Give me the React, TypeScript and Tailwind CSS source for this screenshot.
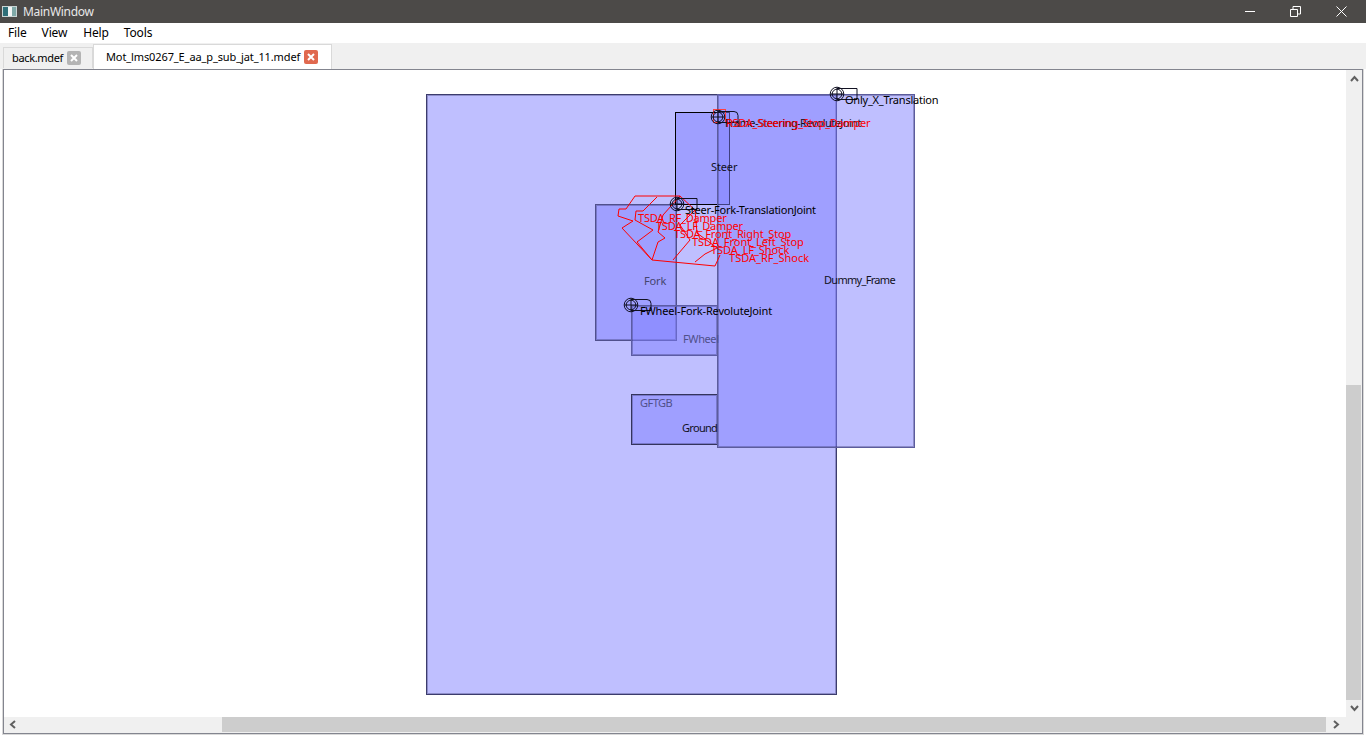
import React from 'react';

const OX = 4;
const OY = 70;

type Box = { x: number; y: number; w: number; h: number; border: string };

const soft = 'shadow-[inset_0_0_0_1px_rgba(50,50,100,0.35)]';

const boxes: Box[] = [
  { x: 426, y: 94, w: 411, h: 601, border: `border-[#3c3c6c] ${soft}` },
  { x: 595, y: 204, w: 82, h: 137, border: `border-[#50508c] ${soft}` },
  { x: 631, y: 305, w: 87, h: 51, border: `border-[#5c5ca4] ${soft}` },
  { x: 631, y: 394, w: 87, h: 51, border: `border-[#34345c] ${soft}` },
  { x: 675, y: 112, w: 55, h: 93, border: 'border-[#000000]' },
  { x: 717, y: 94, w: 198, h: 354, border: `border-[#5c5c9c] ${soft}` },
];

type Label = { x: number; y: number; text: string; color: string; track: string };

const labels: Label[] = [
  { x: 711, y: 160, text: 'Steer', color: 'text-[#111122]', track: 'tracking-[-0.12px]' },
  { x: 644, y: 274, text: 'Fork', color: 'text-[#45456e]', track: 'tracking-[-0.12px]' },
  { x: 683, y: 332, text: 'FWheel', color: 'text-[#50508a]', track: 'tracking-[-0.4px]' },
  { x: 640, y: 396, text: 'GFTGB', color: 'text-[#50508a]', track: 'tracking-[-0.5px]' },
  { x: 682, y: 421, text: 'Ground', color: 'text-[#111122]', track: 'tracking-[-0.7px]' },
  { x: 824, y: 273, text: 'Dummy_Frame', color: 'text-[#111122]', track: 'tracking-[-0.7px]' },
  { x: 845, y: 93, text: 'Only_X_Translation', color: 'text-[#000000]', track: 'tracking-[-0.23px]' },
  { x: 725, y: 116, text: 'Frame-Steering-RevoluteJoint', color: 'text-[#111122]', track: 'tracking-[-0.55px]' },
  { x: 685, y: 203, text: 'Steer-Fork-TranslationJoint', color: 'text-[#000000]', track: 'tracking-[-0.23px]' },
  { x: 640, y: 304, text: 'FWheel-Fork-RevoluteJoint', color: 'text-[#000000]', track: 'tracking-[-0.16px]' },
  { x: 726, y: 116, text: 'RSDA_Steering_Stop_Damper', color: 'text-[#ff0000]', track: 'tracking-[-0.28px]' },
  { x: 638, y: 211, text: 'TSDA_RF_Damper', color: 'text-[#ff0000]', track: 'tracking-[-0.2px]' },
  { x: 656, y: 219, text: 'TSDA_LF_Damper', color: 'text-[#ff0000]', track: 'tracking-[-0.25px]' },
  { x: 674, y: 227, text: 'TSDA_Front_Right_Stop', color: 'text-[#ff0000]', track: 'tracking-[-0.12px]' },
  { x: 692, y: 235, text: 'TSDA_Front_Left_Stop', color: 'text-[#ff0000]', track: 'tracking-[-0.02px]' },
  { x: 711, y: 243, text: 'TSDA_LF_Shock', color: 'text-[#ff0000]', track: 'tracking-[-0.05px]' },
  { x: 729, y: 251, text: 'TSDA_RF_Shock', color: 'text-[#ff0000]', track: 'tracking-[0.02px]' },
];

const joints = [
  { x: 837, y: 94, round: false },
  { x: 718, y: 117, round: true },
  { x: 677, y: 204, round: false },
  { x: 631, y: 305, round: true },
];

const springs = [
  '635,196 626,209 619,209 618,216 633,221 622,228 652,260 715,266 720,255',
  '657,197 643,211 636,211 635,220 653,230 637,242 652,260',
  '635,196 680,196 663,215 658,232 665,238 658,242 652,260',
  '680,196 695,210 680,225 690,240 673,260',
  '695,210 697,233 717,248 705,254 695,262',
];

function Chevron({ points }: { points: string }) {
  return (
    <svg width="9" height="7" viewBox="0 0 9 7" className="overflow-visible">
      <polyline points={points} fill="none" stroke="#606060" strokeWidth="2" />
    </svg>
  );
}

function TabClose({ active }: { active?: boolean }) {
  return (
    <span className={`flex h-[14px] w-[14px] shrink-0 items-center justify-center rounded-[2px] ${active ? 'bg-[#e0694f]' : 'bg-[#b4b4b4]'}`}>
      <svg width="8" height="8" viewBox="0 0 8 8">
        <path d="M1 1 7 7M7 1 1 7" stroke="#ffffff" strokeWidth="2" />
      </svg>
    </span>
  );
}

function Canvas() {
  return (
    <div className="relative min-w-0 flex-1 overflow-hidden bg-white font-['Noto_Sans',sans-serif] text-[11px] leading-[13px]">
      {boxes.map((b) => (
        <div
          key={`${b.x}-${b.y}`}
          className={`absolute border bg-[rgba(128,128,255,0.5)] ${b.border}`}
          style={{ left: b.x - OX, top: b.y - OY, width: b.w, height: b.h }}
        />
      ))}
      <svg className="absolute left-0 top-0" width="1341" height="647" viewBox={`${OX} ${OY} 1341 647`}>
        <rect x="713.500" y="109.500" width="12" height="13" fill="none" stroke="#ff4040" />
        {springs.map((s) => (
          <polyline key={s} points={s} fill="none" stroke="#ff0000" strokeWidth="1" />
        ))}
        {joints.map((j) => (
          <g key={`${j.x}-${j.y}`} fill="none" stroke="#111122" strokeWidth="1">
            {j.round ? (
              <path d={`M${j.x} ${j.y - 5.5}H${j.x + 16}a4 4 0 0 1 4 4V${j.y + 5.5}H${j.x}`} />
            ) : (
              <path d={`M${j.x} ${j.y - 5.5}H${j.x + 20}V${j.y + 5.5}H${j.x}`} />
            )}
            <circle cx={j.x} cy={j.y} r="6.8" />
            <circle cx={j.x} cy={j.y} r="4.8" />
            <path d={`M${j.x} ${j.y - 6.5}V${j.y + 6.5}M${j.x - 6.5} ${j.y}H${j.x + 6.5}`} />
          </g>
        ))}
      </svg>
      {labels.map((l) => (
        <span
          key={l.text}
          className={`absolute whitespace-nowrap ${l.color} ${l.track}`}
          style={{ left: l.x - OX, top: l.y - OY }}
        >
          {l.text}
        </span>
      ))}
    </div>
  );
}

export default function App() {
  return (
    <div className="flex h-[738px] w-[1366px] flex-col overflow-hidden bg-white font-['Noto_Sans',sans-serif] text-[12px] text-black">
      <div className="flex h-[23px] shrink-0 items-center bg-[#4c4a48] text-[#e8e8e8]">
        <svg width="15" height="11" viewBox="0 0 15 11" className="ml-[2px]">
          <rect width="15" height="11" fill="#c8d4d4" />
          <rect x="1" y="1" width="5" height="9" fill="#2f6f78" />
          <rect x="6" y="1" width="4" height="9" fill="#f2f5f5" />
          <rect x="10" y="1" width="4" height="9" fill="#7fa9a8" />
        </svg>
        <span className="ml-[6px] text-[12px] tracking-[-0.3px]">MainWindow</span>
        <div className="ml-auto flex items-center">
          <svg width="10" height="2" viewBox="0 0 10 2" className="mr-[35px]">
            <rect width="10" height="1" fill="#ffffff" />
          </svg>
          <svg width="11" height="11" viewBox="0 0 11 11" className="mr-[35px]">
            <path d="M.5 3.500h7v7h-7zM3 3.500V.500h7.500V8H7.500" fill="none" stroke="#ffffff" />
          </svg>
          <svg width="11" height="11" viewBox="0 0 11 11" className="mr-[19px]">
            <path d="M.5.500l10 10M10.500.500l-10 10" fill="none" stroke="#ffffff" />
          </svg>
        </div>
      </div>

      <div className="flex h-[20px] shrink-0 items-center bg-white pl-[8px] text-[12px] tracking-[-0.15px]">
        <span className="mr-[15px]">File</span>
        <span className="mr-[16px]">View</span>
        <span className="mr-[15px]">Help</span>
        <span>Tools</span>
      </div>

      <div className="flex h-[26px] shrink-0 items-end bg-[#f0f0f0] pl-[3px]">
        <div className="mb-[1px] flex h-[21px] w-[90px] items-center border border-b-0 border-[#d9d9d9] bg-[#f0f0f0] pl-[8px] text-[11px] tracking-[-0.35px]">
          <span className="mr-[4px]">back.mdef</span>
          <TabClose />
        </div>
        <div className="flex h-[25px] w-[239px] items-center border border-b-0 border-[#d9d9d9] bg-white pl-[12px] text-[11px] tracking-[-0.11px]">
          <span className="mr-[4px]">Mot_lms0267_E_aa_p_sub_jat_11.mdef</span>
          <TabClose active />
        </div>
      </div>

      <div className="mx-[2px] mb-[3px] flex min-h-0 flex-1 border border-t-0 border-[#d9d9d9] bg-[#f0f0f0]">
        <div className="flex min-w-0 flex-1 flex-col border border-[#83858f]">
          <div className="flex min-h-0 flex-1">
            <Canvas />
            <div className="flex w-[16px] shrink-0 flex-col bg-[#f0f0f0]">
              <div className="flex h-[17px] items-center justify-center">
                <Chevron points="1,6 4.500,2 8,6" />
              </div>
              <div className="h-[299px]" />
              <div className="mr-[1px] h-[317px] bg-[#cdcdcd]" />
              <div className="flex-1" />
              <div className="flex h-[17px] items-center justify-center">
                <Chevron points="1,1 4.500,5 8,1" />
              </div>
            </div>
          </div>
          <div className="flex h-[16px] shrink-0 bg-[#f0f0f0] pb-[1px]">
            <div className="flex w-[17px] items-center justify-center">
              <svg width="7" height="9" viewBox="0 0 7 9"><polyline points="6,1 2,4.500 6,8" fill="none" stroke="#606060" strokeWidth="2" /></svg>
            </div>
            <div className="w-[201px]" />
            <div className="w-[1104px] bg-[#cdcdcd]" />
            <div className="flex flex-1 items-center justify-center pr-[16px]">
              <svg width="7" height="9" viewBox="0 0 7 9"><polyline points="1,1 5,4.500 1,8" fill="none" stroke="#606060" strokeWidth="2" /></svg>
            </div>
          </div>
        </div>
      </div>
    </div>
  );
}
